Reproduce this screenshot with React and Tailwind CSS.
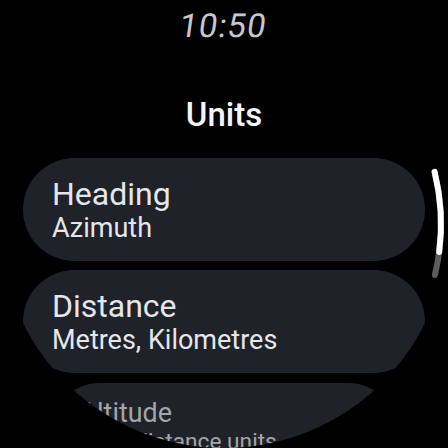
const items = [
  { title: 'Heading', value: 'Azimuth' },
  { title: 'Distance', value: 'Metres, Kilometres' },
];

const UnitCard = ({ title, value, faded }) => (
  <div
    className={
      'w-[402px] shrink-0 rounded-full bg-[#1f2228] pl-[29px] pr-6 pt-[18px] pb-[17px] ' +
      (faded ? 'mt-[1px] origin-top scale-[0.84]' : '')
    }
  >
    <div className={'text-[32px] leading-[36px] whitespace-nowrap ' + (faded ? 'text-[#a3a5ab]' : 'text-[#e4e6eb]')}>
      {title}
    </div>
    <div className={'text-[27px] leading-[32px] whitespace-nowrap ' + (faded ? 'text-[#a3a5ab]' : 'text-[#e4e6eb]')}>
      {value}
    </div>
  </div>
);

const ScrollIndicator = () => (
  <svg className="absolute inset-0 pointer-events-none" width="448" height="448" viewBox="0 0 448 448">
    <path d="M 434.6 171.9 A 217 217 0 0 1 434.9 275" fill="none" stroke="#5c5c5e" strokeWidth="6" strokeLinecap="round" />
    <path d="M 434.6 171.9 A 217 217 0 0 1 439.2 251.9" fill="none" stroke="#ffffff" strokeWidth="6" strokeLinecap="round" />
  </svg>
);

export default function App() {
  return (
    <div className="relative w-[448px] h-[448px] bg-black overflow-hidden" style={{ fontFamily: 'Roboto, "Noto Sans", sans-serif' }}>
      <div className="w-[448px] h-[448px] rounded-full overflow-hidden flex flex-col items-center">
        {/* time */}
        <div className="pt-[6px] text-[33px] leading-[40px] text-[#c6c8ce] tracking-[1px] -skew-x-[8deg]">10:50</div>
        {/* screen title */}
        <div className="mt-[49px] text-[33px] leading-[40px] font-medium text-[#f4f4f6]">Units</div>
        <div className="mt-[23px] flex flex-col items-center gap-[9px]">
          {items.map((it) => (
            <UnitCard key={it.title} title={it.title} value={it.value} />
          ))}
          <UnitCard title="Altitude" value="Uses distance units" faded />
        </div>
      </div>
      <ScrollIndicator />
    </div>
  );
}
